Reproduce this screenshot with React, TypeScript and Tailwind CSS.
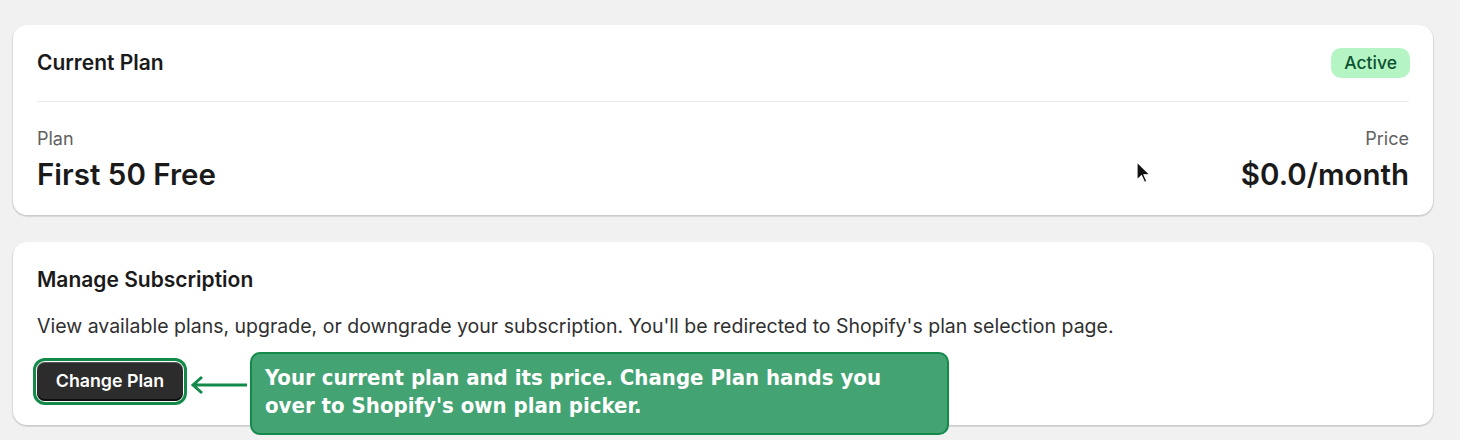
import React from "react";

function Cursor() {
  return (
    <svg width="16" height="24" viewBox="0 0 16 24" className="absolute left-[1135px] top-[161px]">
      <path d="M2 1 L2 19 L6.5 14.8 L9.6 21.5 L12 20.4 L9 13.8 L14.8 13.6 Z" fill="#111" stroke="#fff" strokeWidth="1.2" />
    </svg>
  );
}

export default function App() {
  return (
    <div className="relative w-[1460px] h-[440px] overflow-hidden bg-[#f1f1f1] font-['Inter','Liberation_Sans',sans-serif] text-[#303030]">
      <div className="flex flex-col gap-[27px] pt-[25px] pl-[13px] w-[1433px]">
        {/* Current plan card */}
        <div className="h-[190px] rounded-[14px] bg-white px-6 shadow-[0_1px_0_1px_rgba(0,0,0,0.07),0_1px_2px_rgba(0,0,0,0.12)]">
          <div className="flex items-center justify-between h-[77px] border-b border-[#ebebeb]">
            <h2 className="text-[21px] font-semibold text-[#1a1a1a]">Current Plan</h2>
            <span className="-mr-px rounded-[10px] bg-[#b4f5c3] px-[13px] py-[2px] text-[17.5px] font-medium text-[#0c5132]">Active</span>
          </div>
          <div className="flex items-end justify-between pt-[24px]">
            <div className="flex flex-col">
              <span className="text-[18px] leading-[26px] text-[#616161]">Plan</span>
              <span className="mt-[3px] text-[29.5px] font-semibold leading-[38px] text-[#1a1a1a]">First 50 Free</span>
            </div>
            <div className="flex flex-col items-end">
              <span className="text-[18px] leading-[26px] text-[#616161]">Price</span>
              <span className="mt-[3px] text-[29.5px] font-semibold leading-[38px] text-[#1a1a1a]">$0.0/month</span>
            </div>
          </div>
        </div>

        {/* Manage subscription card */}
        <div className="h-[183px] rounded-[14px] bg-white px-6 pt-[25px] shadow-[0_1px_0_1px_rgba(0,0,0,0.07),0_1px_2px_rgba(0,0,0,0.12)]">
          <h2 className="text-[21px] font-semibold text-[#1a1a1a] leading-[26px]">Manage Subscription</h2>
          <p className="mt-[20px] text-[19.5px] leading-[26px] text-[#303030]">
            View available plans, upgrade, or downgrade your subscription. You'll be redirected to Shopify's plan selection page.
          </p>
          <button className="mt-[23px] h-[39px] w-[146px] rounded-[8px] bg-[#2c2c2c] text-[17.8px] font-semibold text-white shadow-[inset_0_-2px_0_rgba(0,0,0,0.7),inset_0_1px_0_rgba(255,255,255,0.2)] outline-3 outline-offset-1 outline-[#138a4a]">
            Change Plan
          </button>
        </div>
      </div>

      {/* Annotation arrow */}
      <svg width="60" height="24" viewBox="0 0 60 24" className="absolute left-[189px] top-[373px]">
        <path d="M58 12 H4 M13 4 L4 12 L13 20" fill="none" stroke="#138a4a" strokeWidth="3" />
      </svg>

      {/* Annotation callout */}
      <div className="absolute left-[250px] top-[352px] w-[699px] h-[83px] rounded-[10px] border-2 border-[#138a4a] bg-[#43a373] px-[13px] pt-[10px] font-['DejaVu_Sans_Condensed','DejaVu_Sans',sans-serif] font-stretch-condensed text-[22px] font-bold leading-[28px] text-white">
        Your current plan and its price. Change Plan hands you
        <br />
        over to Shopify's own plan picker.
      </div>

      <Cursor />
    </div>
  );
}
